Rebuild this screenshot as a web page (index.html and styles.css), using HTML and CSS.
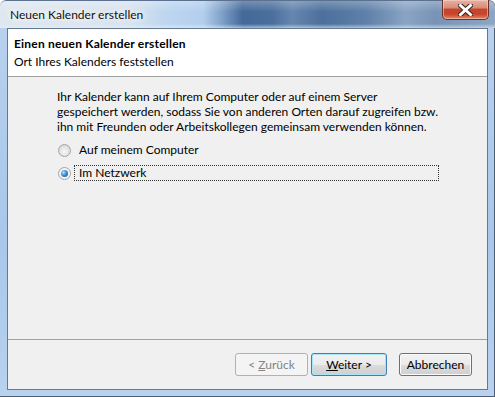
FILE: index.html
```
<!DOCTYPE html>
<html>
	<head>
		<title>Neuen Kalender erstellen</title>
		<link rel="stylesheet" href="styles.css">
	</head>
	<body>
		<div class="window">
			<div class="titlebar">
				<span class="title">Neuen Kalender erstellen</span>
				<span class="close">
					<svg width="15" height="12" viewBox="0 0 15 12">
						<path d="M2.5 1.5 L12.5 10.5 M12.5 1.5 L2.5 10.5" stroke="#3d2620" stroke-width="5" stroke-linecap="square"/>
						<path d="M2.5 1.5 L12.5 10.5 M12.5 1.5 L2.5 10.5" stroke="#fff" stroke-width="3" stroke-linecap="square"/>
					</svg>
				</span>
			</div>
			<div class="client">
				<div class="header">
					<div class="header-title">Einen neuen Kalender erstellen</div>
					<div class="header-sub">Ort Ihres Kalenders feststellen</div>
				</div>
				<div class="content">
					<p class="intro">Ihr Kalender kann auf Ihrem Computer oder auf einem Server<br>gespeichert werden, sodass Sie von anderen Orten darauf zugreifen bzw.<br>ihn mit Freunden oder Arbeitskollegen gemeinsam verwenden können.</p>
					<div class="option">
						<span class="radio"></span>
						<span class="option-label">Auf meinem Computer</span>
					</div>
					<div class="option">
						<span class="radio checked"></span>
						<span class="option-label focused">Im Netzwerk</span>
					</div>
				</div>
				<div class="footer">
					<button class="btn btn-back" disabled>&lt; <u>Z</u>urück</button>
					<button class="btn btn-next"><u>W</u>eiter &gt;</button>
					<button class="btn btn-cancel">Abbrechen</button>
				</div>
			</div>
		</div>
	</body>
</html>
```
FILE: styles.css
```
* {
	box-sizing: border-box;
}

body {
	margin: 0;
	font-family: Lato, 'Liberation Sans', Arial, sans-serif;
	font-size: 12px;
	color: #000;
}

.window {
	display: flex;
	flex-direction: column;
	width: 495px;
	height: 397px;
	padding: 0 7px 7px 7px;
	border-radius: 6px 6px 0 0;
	background: linear-gradient(to bottom, #b9d2ee, #a9c7ea 60%, #b8d2ef);
	box-shadow: inset -1px -1px 0 #4d5f74;
	overflow: hidden;
}

.titlebar {
	display: flex;
	align-items: flex-start;
	height: 28px;
	margin: 0 -7px;
	padding: 0 6px 0 10px;
	border-top: 1px solid #5c7090;
	border-radius: 6px 6px 0 0;
	background:
		linear-gradient(to bottom, rgba(255, 255, 255, 0.25), rgba(255, 255, 255, 0) 40%, rgba(255, 255, 255, 0) 85%, rgba(230, 240, 250, 0.6)),
		linear-gradient(to right, #dfe7f0 0%, #d8e3ef 26%, #bdd5ef 34%, #b3cfee 41%, #7d9fc6 45%, #44699a 49%, #4b6f9c 55%, #6686af 59%, #4c709c 65%, #5e80a9 74%, #8aa4c4 82%, #7893b6 88%, #8ea6c3 100%);
}

.title {
	line-height: 27px;
	color: #111;
	text-shadow: 0 0 6px #fff, 0 0 10px #fff, 0 0 14px rgba(255, 255, 255, 0.9);
}

.close {
	display: flex;
	align-items: center;
	justify-content: center;
	width: 47px;
	height: 20px;
	margin-left: auto;
	margin-top: -1px;
	border: 1px solid #6b3328;
	border-top: none;
	border-radius: 0 0 5px 5px;
	background: linear-gradient(to bottom, #e7b2a5 0%, #d88c79 40%, #c4452f 50%, #c9452b 75%, #e08a6a 100%);
	box-shadow: inset 0 0 0 1px rgba(255, 220, 210, 0.5);
}

.client {
	display: flex;
	flex-direction: column;
	flex: 1;
	border: 1px solid #64788f;
	background: #f0f0f0;
}

.header {
	height: 48px;
	padding: 6px 0 0 6px;
	background: #fff;
	border-bottom: 1px solid #a0a0a0;
}

.header-title {
	font-weight: bold;
	letter-spacing: 0.2px;
	line-height: 17px;
}

.header-sub {
	margin-top: 1px;
	line-height: 17px;
}

.content {
	flex: 1;
	padding: 12px 0 0 49px;
}

.intro {
	margin: 0 0 8px 0;
	line-height: 15px;
}

.option {
	display: flex;
	align-items: center;
	height: 16px;
	margin-bottom: 7px;
}

.radio {
	position: relative;
	width: 13px;
	height: 13px;
	margin-left: 1px;
	margin-right: 3px;
	border: 1px solid #a4a4a4;
	border-radius: 50%;
	background: radial-gradient(circle at 50% 60%, #f8f8f8 0%, #e6e6e6 45%, #d0d0d0 100%);
}

.radio.checked {
	background: #f4f4f4;
}

.radio.checked:after {
	content: "";
	position: absolute;
	left: 2px;
	top: 2px;
	width: 7px;
	height: 7px;
	border-radius: 50%;
	background: radial-gradient(circle at 35% 35%, #b6e1fb 0%, #3d8ed3 45%, #1b4e88 100%);
}

.option-label {
	width: 365px;
	height: 16px;
	padding-left: 4px;
	line-height: 14px;
	border: 1px dotted transparent;
}

.option-label.focused {
	border-color: #333;
}

.footer {
	display: flex;
	justify-content: flex-end;
	align-items: flex-start;
	height: 50px;
	padding: 13px 15px 0 0;
	border-top: 1px solid #a0a0a0;
}

.btn {
	width: 73px;
	height: 23px;
	padding: 0;
	border: 1px solid #707070;
	border-radius: 3px;
	background: linear-gradient(to bottom, #f2f2f2, #ebebeb 50%, #dddddd 50%, #cfcfcf);
	box-shadow: inset 0 0 0 1px #fbfbfb;
	font-family: inherit;
	font-size: 12px;
	color: #000;
}

.btn-back {
	margin-right: 3px;
	border-color: #adb2b5;
	background: #f4f4f4;
	box-shadow: none;
	color: #838383;
}

.btn-next {
	width: 76px;
	margin-right: 12px;
	border-color: #3c7fb1;
	box-shadow: inset 0 0 0 1px #a9e4f8;
}
```
